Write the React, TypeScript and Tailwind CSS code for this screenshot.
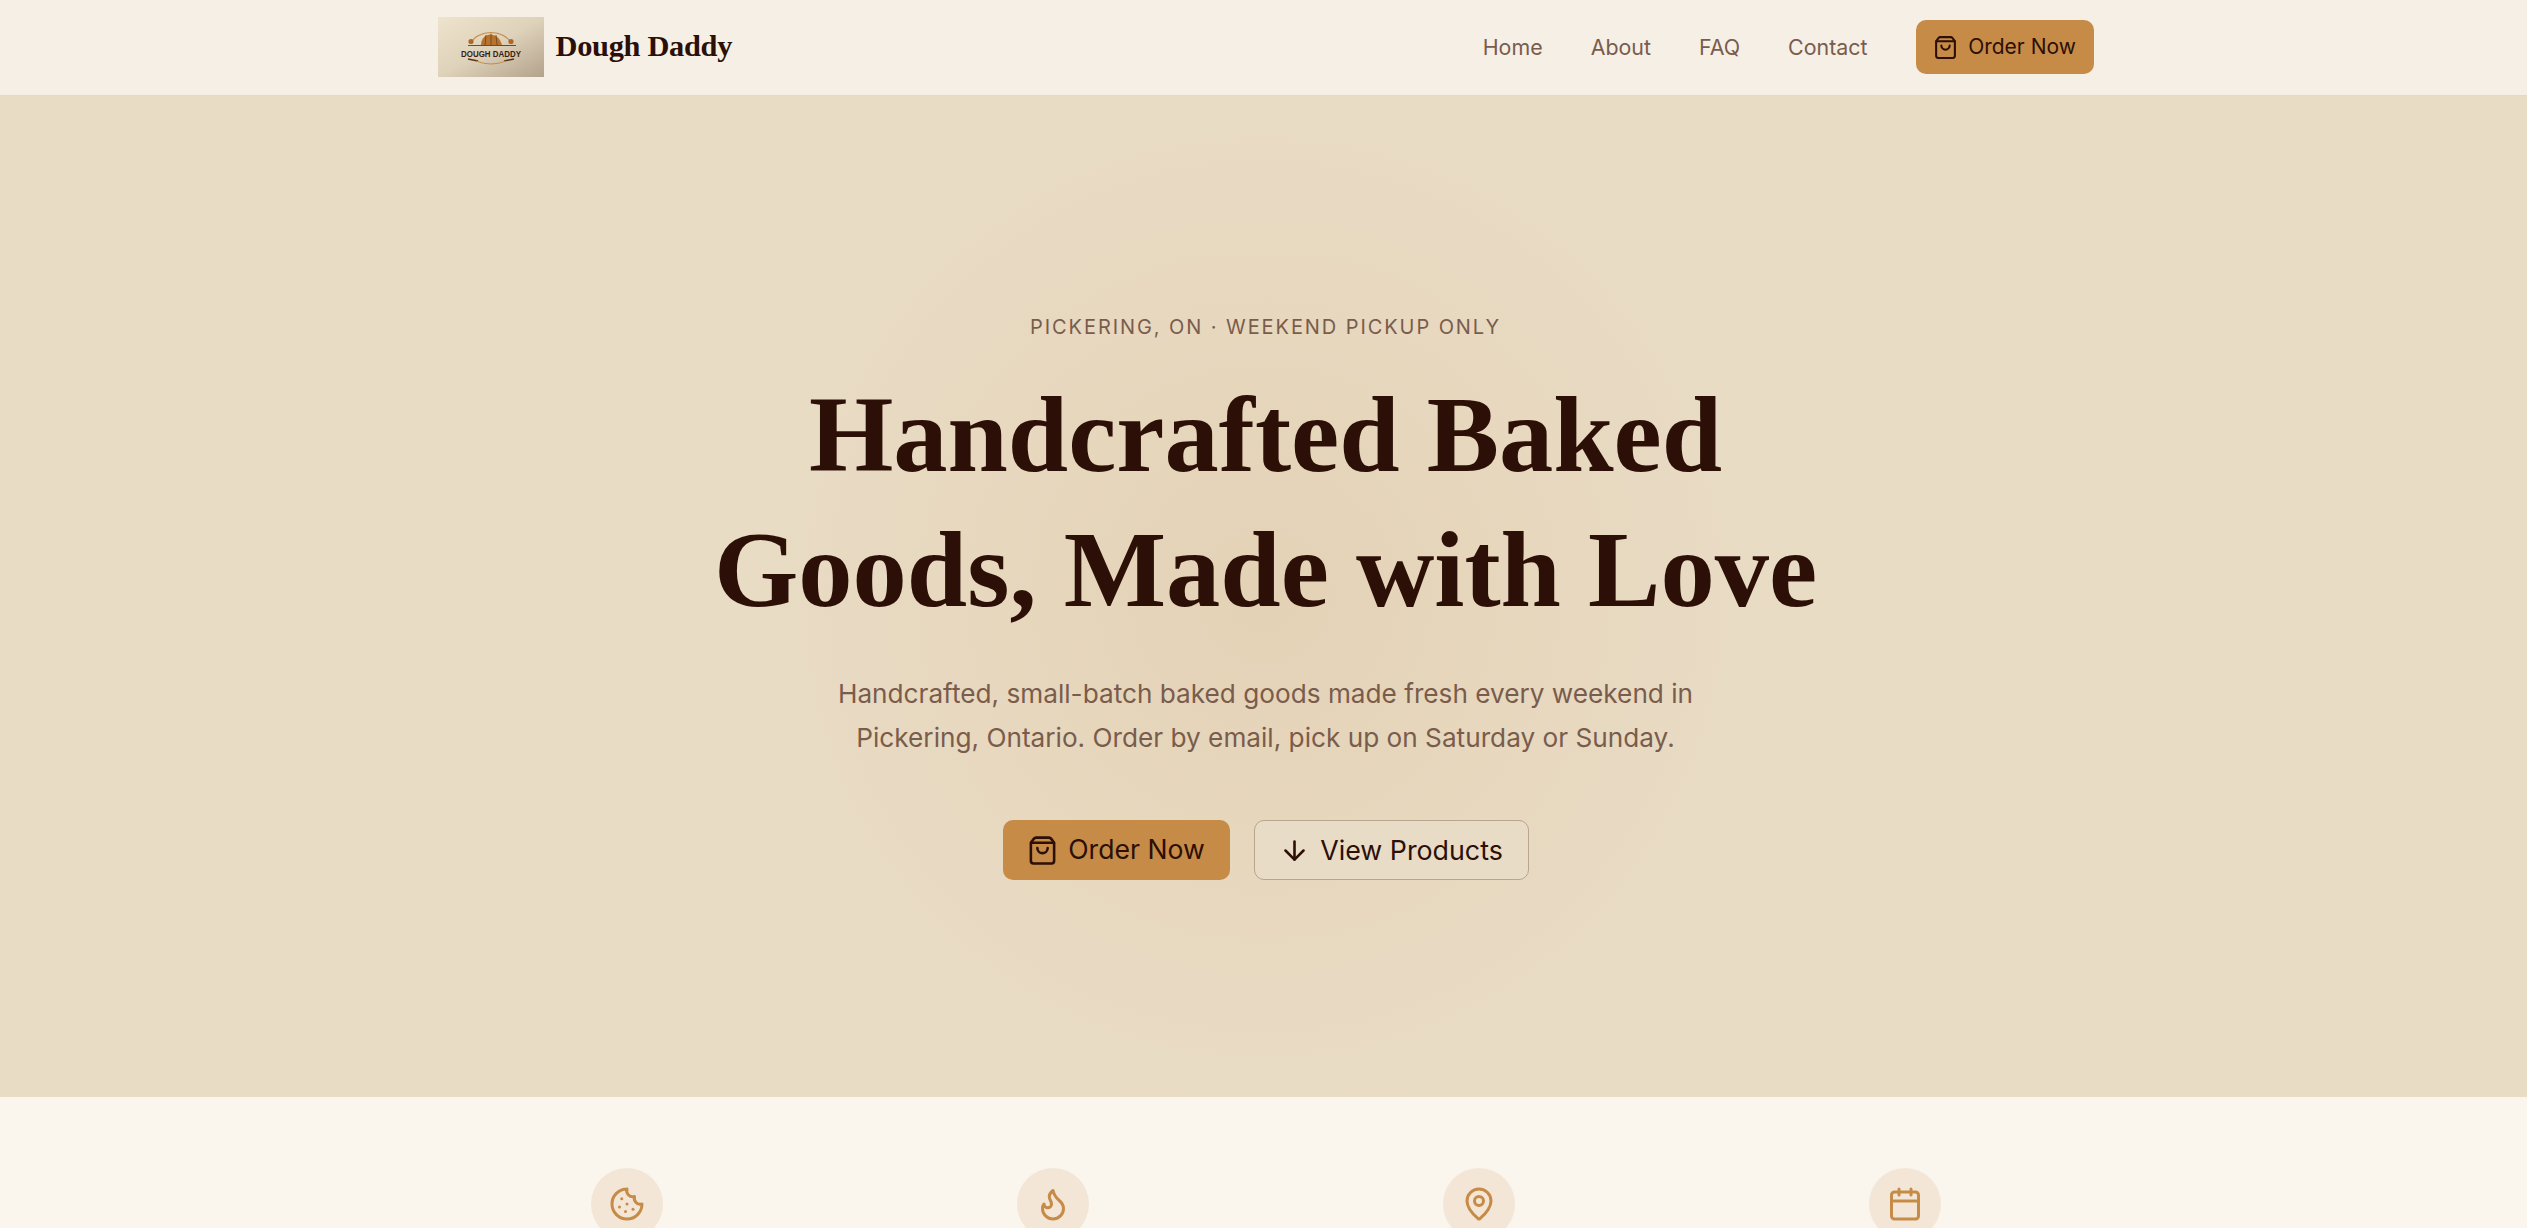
import React from 'react';
import { ArrowDown, Calendar, Cookie, Flame, MapPin, ShoppingBag } from 'lucide-react';

const sans = 'font-["Inter",sans-serif]';
const serif = 'font-["Liberation_Serif",serif]';

const navLinks = ['Home', 'About', 'FAQ', 'Contact'];
const features = [Cookie, Flame, MapPin, Calendar];

// The logo in the reference is a small raster badge, redrawn here
const LogoBadge: React.FC = () => (
  <div className="h-[60px] w-[106px] bg-gradient-to-br from-[#eee3cd] via-[#dfd2ba] to-[#b3a28c]">
    <svg viewBox="0 0 106 60" className="h-[60px] w-[106px]">
      <path d="M33 26 A21 15 0 0 1 73 26" fill="none" stroke="#c68b47" strokeWidth="1.1" />
      <path d="M43 28 C43 15 60 13 64 28 Z" fill="#b8742f" />
      <path d="M48 18 L47 28 M53 16.5 L53 28 M58 18 L59 28" stroke="#6e3f1a" strokeWidth="0.8" />
      <circle cx="33" cy="24.5" r="2.6" fill="#b0672a" />
      <circle cx="73" cy="24.5" r="2.6" fill="#b0672a" />
      <path d="M30 28.5 H78" stroke="#4a2a16" strokeWidth="0.8" />
      <text
        x="53"
        y="39.5"
        textAnchor="middle"
        textLength="60"
        lengthAdjust="spacingAndGlyphs"
        fontFamily="Liberation Sans, sans-serif"
        fontWeight="700"
        fontSize="9.5"
        fill="#3a1d0e"
      >
        DOUGH DADDY
      </text>
      <path d="M30 42 L40 44 M76 42 L66 44" stroke="#5b3116" strokeWidth="1.6" />
      <path d="M38 44 Q53 50 68 44" fill="none" stroke="#c68b47" strokeWidth="1" />
    </svg>
  </div>
);

const App: React.FC = () => {
  return (
    <div className={`h-[1228px] overflow-hidden bg-[#faf5ed] ${sans}`}>
      <header className="h-[96px] border-b border-[#e6d9c3] bg-[#f5efe6] pl-1">
        <div className="mx-auto flex h-[94px] w-[1656px] items-center justify-between">
          <div className="flex items-center gap-3">
            <LogoBadge />
            <span className={`${serif} text-[30.4px] font-bold tracking-[-0.3px] text-[#2c0f06]`}>Dough Daddy</span>
          </div>
          <nav className="flex items-center gap-12">
            {navLinks.map(link => (
              <a key={link} className="text-[21.4px] text-[#7a5c4c]">
                {link}
              </a>
            ))}
            <button className="flex h-[54px] w-[178px] items-center justify-center gap-2.5 rounded-[10px] bg-[#c68b47] text-[21px] text-[#2c0f06]">
              <ShoppingBag className="h-[25px] w-[25px]" />
              Order Now
            </button>
          </nav>
        </div>
      </header>

      <section className="flex h-[1001px] flex-col items-center bg-[radial-gradient(circle_at_center,#e4d2b6_0%,#e9dcc5_520px)] pl-1 pt-[217px]">
        <p className="text-[20px] leading-[28px] tracking-[1.92px] text-[#7a5c4c]">PICKERING, ON · WEEKEND PICKUP ONLY</p>
        <h1 className={`${serif} mt-[26px] text-center text-[108.5px] font-bold leading-[135px] text-[#2c0f06]`}>
          Handcrafted Baked
          <br />
          Goods, Made with Love
        </h1>
        <p className="mt-[35px] text-center text-[26.2px] leading-[44px] text-[#7a5c4c]">
          Handcrafted, small-batch baked goods made fresh every weekend in
          <br />
          Pickering, Ontario. Order by email, pick up on Saturday or Sunday.
        </p>
        <div className="mt-[60px] flex items-center gap-6">
          <button className="flex h-[60px] w-[227px] items-center justify-center gap-2.5 rounded-[10px] bg-[#c68b47] text-[26.6px] text-[#2c0f06]">
            <ShoppingBag className="h-[31px] w-[31px]" />
            Order Now
          </button>
          <button className="flex h-[60px] w-[275px] items-center justify-center gap-2.5 rounded-[10px] border border-[#b9a48e] bg-[#e8dcc6] text-[26.8px] text-[#2c0f06]">
            <ArrowDown className="h-[31px] w-[31px]" />
            View Products
          </button>
        </div>
      </section>

      <section className="pl-1 pt-[71px]">
        <div className="mx-auto grid w-[1704px] grid-cols-4">
          {features.map((Icon, i) => (
            <div key={i} className="flex justify-center">
              <div className="flex h-[72px] w-[72px] items-center justify-center rounded-full bg-[#f3e6d6]">
                <Icon className="h-[36px] w-[36px] text-[#c68b47]" />
              </div>
            </div>
          ))}
        </div>
      </section>
    </div>
  );
};

export default App;
